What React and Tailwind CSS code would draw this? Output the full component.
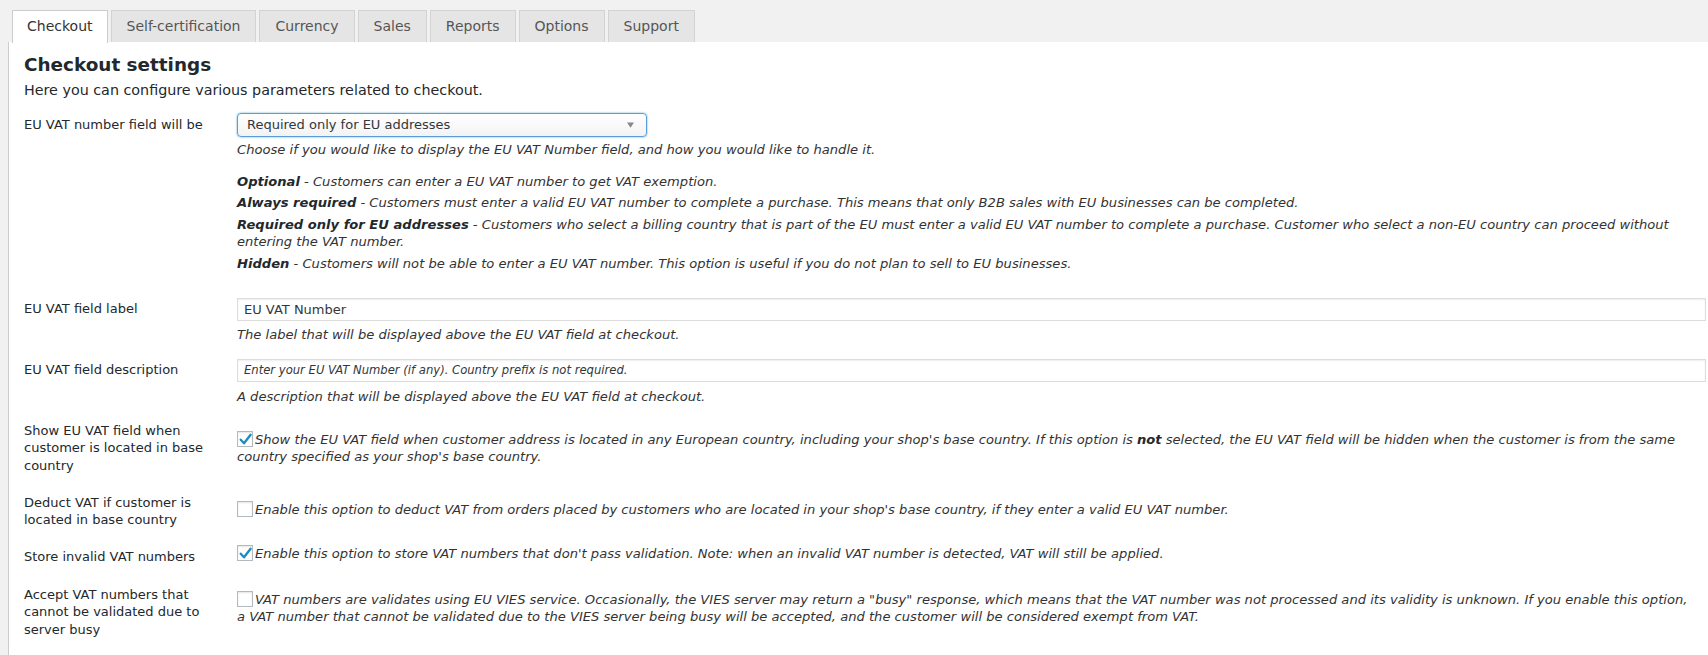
import React from "react";

const tabs = ["Checkout", "Self-certification", "Currency", "Sales", "Reports", "Options", "Support"];

const Checkbox = ({ checked }) => (
  <span className="inline-block w-[16px] h-[16px] mr-[2px] align-[-3px] border border-[#b4b9be] bg-white shadow-[inset_0_1px_2px_rgba(0,0,0,0.1)] relative">
    {checked && (
      <svg viewBox="0 0 16 16" className="absolute left-[-1px] top-[-1px] w-[17px] h-[17px]">
        <path d="M3.5 8.2 L6.6 11.6 L12.8 3.6" fill="none" stroke="#1e8cbe" strokeWidth="2.2" strokeLinecap="round" strokeLinejoin="round" />
      </svg>
    )}
  </span>
);

const Label = ({ children, className = "" }) => (
  <div className={"w-[213px] shrink-0 text-[13px] leading-[17.5px] text-[#23282d] " + className}>{children}</div>
);

export default function App() {
  return (
    <div className="w-full h-[655px] overflow-hidden bg-[#f1f1f1] font-['DejaVu_Sans',Verdana,sans-serif]">
      <div className="flex gap-[3px] pl-[12px] pt-[10px] h-[42px]">
        {tabs.map((t, i) => (
          <div
            key={t}
            className={
              i === 0
                ? "h-[33px] px-[14px] border border-b-0 border-[#ccc] bg-white text-[14px] leading-[31px] text-[#333] relative z-10"
                : "h-[32px] px-[15px] border border-b-0 border-[#d3d3d3] bg-[#e5e5e5] text-[14px] leading-[31px] text-[#555]"
            }
          >
            {t}
          </div>
        ))}
      </div>

      <div className="ml-[8px] h-[613px] bg-white border-l border-[#ccc] pl-[15px] pr-[2px] text-[#333]">
        <h2 className="pt-[10px] text-[18.4px] leading-[26px] font-bold text-[#23282d]">Checkout settings</h2>
        <p className="mt-[3px] text-[14.3px] leading-[18px] text-[#23282d]">
          Here you can configure various parameters related to checkout.
        </p>

        {/* EU VAT number field */}
        <div className="flex mt-[14px]">
          <Label className="pt-[3px] leading-[18px]">EU VAT number field will be</Label>
          <div className="flex-1">
            <div className="relative w-[410px] h-[24px] rounded-[4px] border border-[#5b9dd9] shadow-[0_0_2px_rgba(30,140,190,0.8)] bg-gradient-to-b from-white to-[#f3f3f3] pl-[9px] text-[13px] leading-[22px] text-[#32373c]">
              Required only for EU addresses
              <svg viewBox="0 0 8 6" className="absolute right-[12px] top-[8px] w-[7px] h-[6px]">
                <path d="M0 0 L8 0 L4 6 Z" fill="#888" />
              </svg>
            </div>
            <p className="mt-[4px] text-[13.1px] leading-[18px] italic whitespace-nowrap">
              Choose if you would like to display the EU VAT Number field, and how you would like to handle it.
            </p>
            <div className="mt-[14px] text-[13.1px] leading-[17.5px] italic whitespace-nowrap">
              <p>
                <b className="text-[#23282d]">Optional</b> - Customers can enter a EU VAT number to get VAT exemption.
              </p>
              <p className="mt-[3.5px]">
                <b className="text-[#23282d]">Always required</b> - Customers must enter a valid EU VAT number to complete a purchase. This means that only B2B sales with EU businesses can be completed.
              </p>
              <p className="mt-[4px]">
                <b className="text-[#23282d]">Required only for EU addresses</b> - Customers who select a billing country that is part of the EU must enter a valid EU VAT number to complete a purchase. Customer who select a non-EU country can proceed without
                <br />
                entering the VAT number.
              </p>
              <p className="mt-[4px]">
                <b className="text-[#23282d]">Hidden</b> - Customers will not be able to enter a EU VAT number. This option is useful if you do not plan to sell to EU businesses.
              </p>
            </div>
          </div>
        </div>

        {/* EU VAT field label */}
        <div className="flex mt-[25.5px]">
          <Label className="pt-[2px] leading-[18px]">EU VAT field label</Label>
          <div className="flex-1">
            <div className="h-[23px] border border-[#ddd] shadow-[inset_0_1px_2px_rgba(0,0,0,0.07)] bg-white pl-[6px] text-[13px] leading-[21px] text-[#32373c]">
              EU VAT Number
            </div>
            <p className="mt-[5px] text-[13.1px] leading-[18px] italic">
              The label that will be displayed above the EU VAT field at checkout.
            </p>
          </div>
        </div>

        {/* EU VAT field description */}
        <div className="flex mt-[15px]">
          <Label className="pt-[2px] leading-[18px]">EU VAT field description</Label>
          <div className="flex-1">
            <div className="h-[23px] border border-[#ddd] shadow-[inset_0_1px_2px_rgba(0,0,0,0.07)] bg-white pl-[6px] text-[11.6px] italic leading-[21px] text-[#32373c]">
              Enter your EU VAT Number (if any). Country prefix is not required.
            </div>
            <p className="mt-[6px] text-[13.1px] leading-[18px] italic">
              A description that will be displayed above the EU VAT field at checkout.
            </p>
          </div>
        </div>

        {/* Show EU VAT field */}
        <div className="flex mt-[16px]">
          <Label>
            Show EU VAT field when
            <br />
            customer is located in base
            <br />
            country
          </Label>
          <div className="flex-1 pt-[9px] text-[13.1px] leading-[17.5px] italic whitespace-nowrap">
            <Checkbox checked />
            Show the EU VAT field when customer address is located in any European country, including your shop's base country. If this option is <b className="text-[#23282d]">not</b> selected, the EU VAT field will be hidden when the customer is from the same
            <br />
            country specified as your shop's base country.
          </div>
        </div>

        {/* Deduct VAT */}
        <div className="flex mt-[19.5px]">
          <Label>
            Deduct VAT if customer is
            <br />
            located in base country
          </Label>
          <div className="flex-1 pt-[7px] text-[13.1px] leading-[17.5px] italic whitespace-nowrap">
            <Checkbox />
            Enable this option to deduct VAT from orders placed by customers who are located in your shop's base country, if they enter a valid EU VAT number.
          </div>
        </div>

        {/* Store invalid */}
        <div className="flex mt-[16px]">
          <Label className="pt-[3px]">Store invalid VAT numbers</Label>
          <div className="flex-1 text-[13.1px] leading-[17.5px] italic whitespace-nowrap">
            <Checkbox checked />
            Enable this option to store VAT numbers that don't pass validation. Note: when an invalid VAT number is detected, VAT will still be applied.
          </div>
        </div>

        {/* Accept busy */}
        <div className="flex mt-[20.5px]">
          <Label>
            Accept VAT numbers that
            <br />
            cannot be validated due to
            <br />
            server busy
          </Label>
          <div className="flex-1 pt-[5px] text-[13.1px] leading-[17.5px] italic whitespace-nowrap">
            <Checkbox />
            VAT numbers are validates using EU VIES service. Occasionally, the VIES server may return a "busy" response, which means that the VAT number was not processed and its validity is unknown. If you enable this option,
            <br />
            a VAT number that cannot be validated due to the VIES server being busy will be accepted, and the customer will be considered exempt from VAT.
          </div>
        </div>
      </div>
    </div>
  );
}
